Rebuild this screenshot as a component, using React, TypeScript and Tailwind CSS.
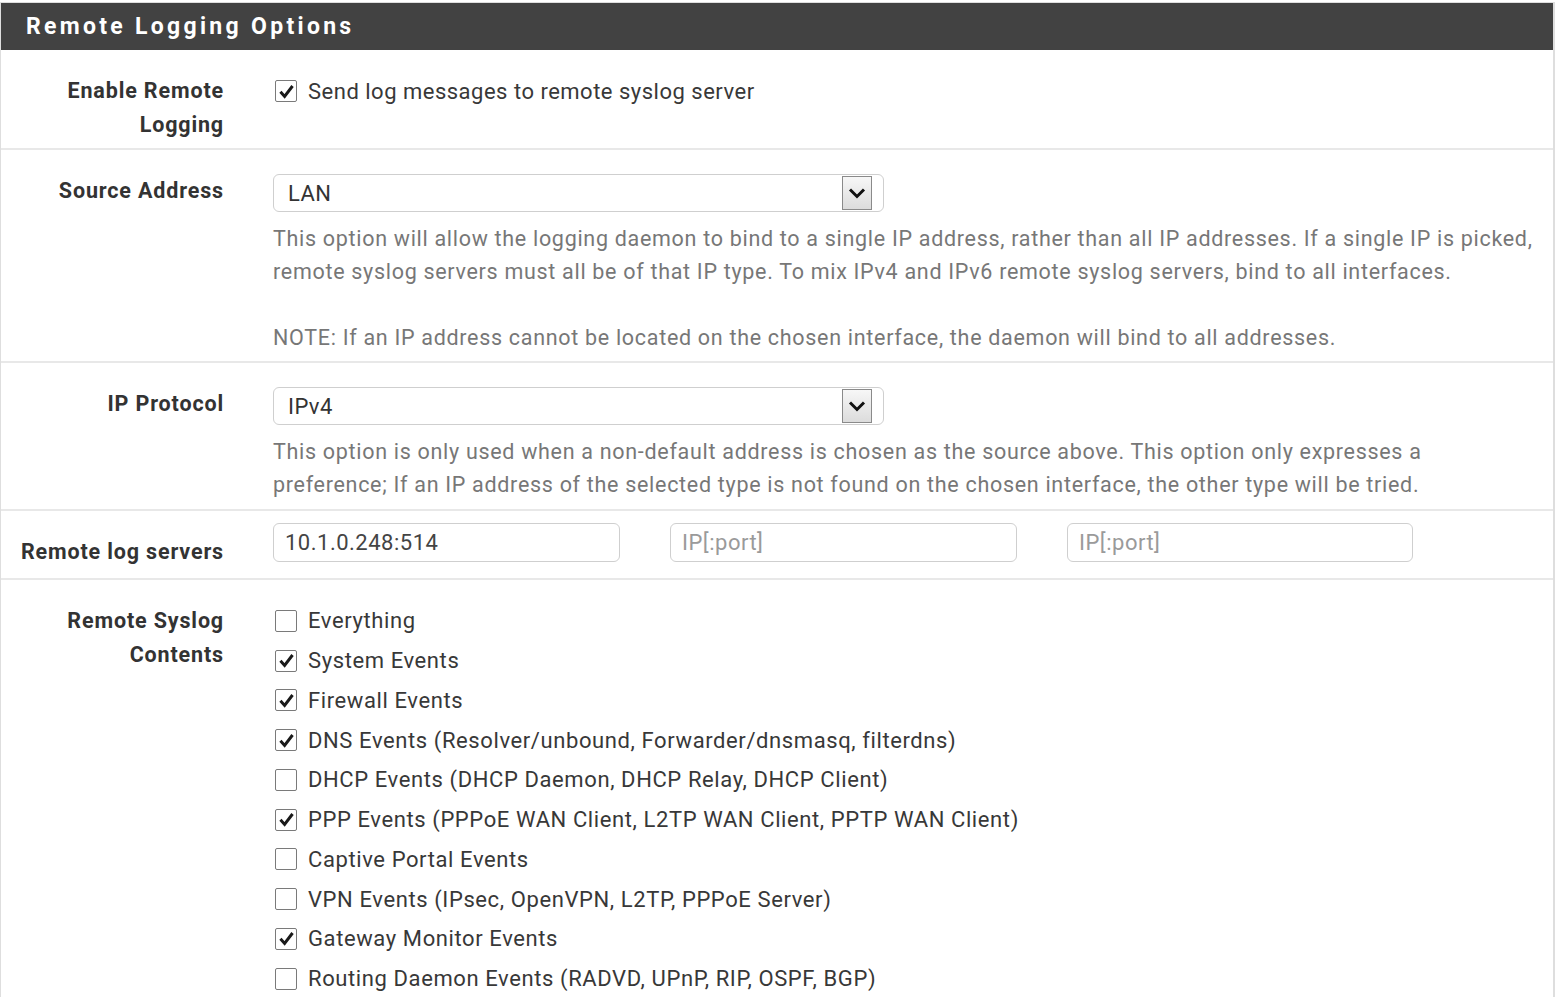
import React from "react";

function Check({ checked }: { checked: boolean }) {
  return (
    <span className="inline-flex h-[22px] w-[22px] shrink-0 items-center justify-center rounded-[2px] border-[1.5px] border-[#7a7a7a] bg-white">
      {checked && (
        <svg width="17" height="17" viewBox="0 0 16 16">
          <path d="M2.3 8.3 L6.2 12.6 L13.7 2.8" fill="none" stroke="#1a1a1a" strokeWidth="2.8" strokeLinecap="butt" strokeLinejoin="miter" />
        </svg>
      )}
    </span>
  );
}

function Select({ value }: { value: string }) {
  return (
    <div className="flex h-[38px] w-[611px] items-center rounded-[6px] border border-[#cfcfcf] bg-white pl-[14px] pr-[11px]">
      <span className="flex-1 text-[22px] tracking-[0.4px] text-[#333]">{value}</span>
      <span className="flex h-[34px] w-[30px] items-center justify-center border border-[#8a8a8a] bg-gradient-to-b from-[#f7f7f7] to-[#dcdcdc]">
        <svg width="18" height="12" viewBox="0 0 18 12">
          <path d="M2 2.5 L9 9.5 L16 2.5" fill="none" stroke="#111" strokeWidth="3" />
        </svg>
      </span>
    </div>
  );
}

function Row({
  label,
  labelPt = "pt-[24px]",
  children,
  className = "",
}: {
  label: React.ReactNode;
  labelPt?: string;
  children: React.ReactNode;
  className?: string;
}) {
  return (
    <div className={`flex border-b-2 border-[#e8e8e8] ${className}`}>
      <div className={`w-[245px] shrink-0 pr-[22px] text-right text-[21.5px] font-bold leading-[34px] tracking-[0.85px] text-[#333] ${labelPt}`}>
        {label}
      </div>
      <div className="flex-1 pl-[27px] pr-[12px]">{children}</div>
    </div>
  );
}

const events: [string, boolean][] = [
  ["Everything", false],
  ["System Events", true],
  ["Firewall Events", true],
  ["DNS Events (Resolver/unbound, Forwarder/dnsmasq, filterdns)", true],
  ["DHCP Events (DHCP Daemon, DHCP Relay, DHCP Client)", false],
  ["PPP Events (PPPoE WAN Client, L2TP WAN Client, PPTP WAN Client)", true],
  ["Captive Portal Events", false],
  ["VPN Events (IPsec, OpenVPN, L2TP, PPPoE Server)", false],
  ["Gateway Monitor Events", true],
  ["Routing Daemon Events (RADVD, UPnP, RIP, OSPF, BGP)", false],
];

export default function App() {
  return (
    <div className="h-[997px] w-[1557px] overflow-hidden bg-white pt-[2px] font-['Roboto','Liberation_Sans',sans-serif]">
      <div className="w-[1555px] border-r-2 border-l border-t border-[#dedede]">
        <div className="flex h-[47px] items-center bg-[#424242] pl-[25px] pt-[2px] text-[23px] font-bold tracking-[3.3px] text-white">
          Remote Logging Options
        </div>

        <Row
          label={
            <>
              Enable Remote
              <br />
              Logging
            </>
          }
          className="h-[100px]"
        >
          <div className="mt-[24px] flex h-[34px] items-center gap-[11px] pl-[2px]">
            <Check checked />
            <span className="text-[22px] tracking-[0.5px] text-[#383838]">Send log messages to remote syslog server</span>
          </div>
        </Row>

        <Row label="Source Address" className="h-[213px]">
          <div className="pt-[24px]">
            <Select value="LAN" />
            <div className="mt-[10px] text-[21.5px] leading-[33px] tracking-[0.7px] text-[#777]">
              This option will allow the logging daemon to bind to a single IP address, rather than all IP addresses. If a single IP is picked,
              remote syslog servers must all be of that IP type. To mix IPv4 and IPv6 remote syslog servers, bind to all interfaces.
              <br />
              <br />
              NOTE: If an IP address cannot be located on the chosen interface, the daemon will bind to all addresses.
            </div>
          </div>
        </Row>

        <Row label="IP Protocol" className="h-[148px]">
          <div className="pt-[24px]">
            <Select value="IPv4" />
            <div className="mt-[10px] text-[21.5px] leading-[33px] tracking-[0.7px] text-[#777]">
              This option is only used when a non-default address is chosen as the source above. This option only expresses a
              <br />
              preference; If an IP address of the selected type is not found on the chosen interface, the other type will be tried.
            </div>
          </div>
        </Row>

        <Row label="Remote log servers" className="h-[69px]">
          <div className="flex gap-[50px] pt-[12px]">
            <div className="flex h-[39px] w-[347px] items-center rounded-[6px] border border-[#cfcfcf] pl-[11px] text-[22px] tracking-[0.5px] text-[#444]">
              10.1.0.248:514
            </div>
            <div className="flex h-[39px] w-[347px] items-center rounded-[6px] border border-[#cfcfcf] pl-[11px] text-[22px] tracking-[0.5px] text-[#9a9a9a]">
              IP[:port]
            </div>
            <div className="flex h-[39px] w-[346px] items-center rounded-[6px] border border-[#cfcfcf] pl-[11px] text-[22px] tracking-[0.5px] text-[#9a9a9a]">
              IP[:port]
            </div>
          </div>
        </Row>

        <Row
          label={
            <>
              Remote Syslog
              <br />
              Contents
            </>
          }
          className="h-[440px] border-b-0"
        >
          <div className="flex flex-col pl-[2px] pt-[21px]">
            {events.map(([t, c]) => (
              <div key={t} className="flex h-[39.75px] items-center gap-[11px]">
                <Check checked={c} />
                <span className="text-[22px] tracking-[0.6px] text-[#383838]">{t}</span>
              </div>
            ))}
          </div>
        </Row>
      </div>
    </div>
  );
}
